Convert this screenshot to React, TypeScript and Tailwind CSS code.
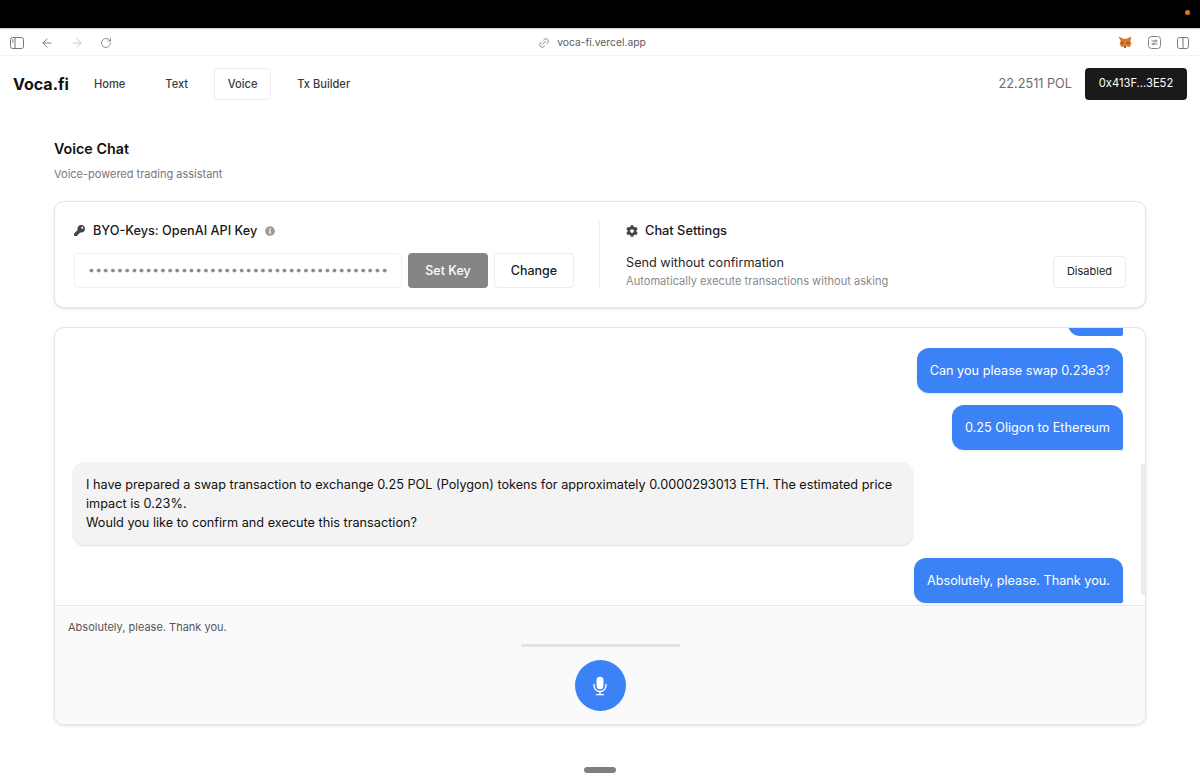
import { ArrowLeft, ArrowRight, RotateCw, Link2 } from "lucide-react"
import { FaKey, FaCog, FaInfoCircle } from "react-icons/fa"

const messages = [
  { id: 1, text: "", mine: true },
  { id: 2, text: "Can you please swap 0.23e3?", mine: true },
  { id: 3, text: "0.25 Oligon to Ethereum", mine: true },
  {
    id: 4,
    text: "I have prepared a swap transaction to exchange 0.25 POL (Polygon) tokens for approximately 0.0000293013 ETH. The estimated price impact is 0.23%.\nWould you like to confirm and execute this transaction?",
    mine: false,
  },
  { id: 5, text: "Absolutely, please. Thank you.", mine: true },
]

function BrowserBar() {
  return (
    <div className="h-[27px] pt-[1px] flex items-center border-b border-[#f3f3f3] bg-white">
      <div className="flex items-center pl-[10px] gap-[16px]">
        <svg width="14" height="12" viewBox="0 0 14 12" fill="none" stroke="#777" strokeWidth="1">
          <rect x="0.5" y="0.5" width="13" height="11" rx="2" />
          <path d="M5 0.5v11" />
          <path d="M1.8 3h2M1.8 5h2" />
        </svg>
        <ArrowLeft size={14} strokeWidth={1.5} color="#6f6f6f" />
        <ArrowRight size={14} strokeWidth={1.5} color="#c4c4c4" />
        <RotateCw size={12} strokeWidth={1.5} color="#6f6f6f" />
      </div>
      <div className="flex-1 flex items-center justify-center gap-[7px] text-[10.3px] text-[#5c5c5c] pr-[46px]">
        <Link2 size={12} strokeWidth={1.6} color="#777" className="-rotate-45" />
        voca-fi.vercel.app
      </div>
      <div className="flex items-center gap-[16px] pr-[11px]">
        <svg width="14" height="13" viewBox="0 0 13 12">
          <path d="M0.5 0.5 5 2.5h3l4.5-2-1 4 1 3-2 3-2-1h-3l-2 1-2-3 1-3z" fill="#d9772b" />
          <path d="M3 5.5l2 1-1.5 1zM10 5.5l-2 1 1.5 1z" fill="#4a3320" />
          <path d="M5.5 9.5h2L7 11H6z" fill="#3b2a1b" />
        </svg>
        <svg width="13" height="13" viewBox="0 0 13 13" fill="none" stroke="#777" strokeWidth="0.9">
          <rect x="0.5" y="0.5" width="12" height="12" rx="3" />
          <path d="M3.5 5h6M3.5 8h6" />
          <circle cx="7.5" cy="5" r="0.9" fill="#fff" />
          <circle cx="5.5" cy="8" r="0.9" fill="#fff" />
        </svg>
        <svg width="12" height="12" viewBox="0 0 12 12" fill="none" stroke="#777" strokeWidth="1">
          <rect x="0.5" y="0.5" width="11" height="11" rx="2" />
          <path d="M6 0.5v11" />
        </svg>
      </div>
    </div>
  )
}

function NavBar() {
  return (
    <nav className="h-[55px] flex items-center justify-between pl-[13px] pr-[13px]">
      <div className="flex items-center">
        <span className="text-[16px] font-bold text-[#111] w-[68px]">Voca.fi</span>
        <div className="flex items-center gap-[13px] text-[11.1px] font-medium text-[#3a3a3d]">
          <a className="px-[13px] h-[32px] pt-[1px] flex items-center">Home</a>
          <a className="ml-[1px] px-[13px] h-[32px] pt-[1px] flex items-center">Text</a>
          <a className="w-[57px] justify-center h-[32px] pt-[1px] flex items-center border border-[#ececec] rounded-[4px]">Voice</a>
          <a className="px-[13px] h-[32px] pt-[1px] flex items-center">Tx Builder</a>
        </div>
      </div>
      <div className="flex items-center gap-[13px]">
        <span className="text-[12.7px] text-[#6b6b6b]">22.2511 POL</span>
        <button className="w-[102px] h-[32px] rounded-[4px] bg-[#1a1a1a] text-[11.2px] text-white">
          0x413F...3E52
        </button>
      </div>
    </nav>
  )
}

function SettingsCard() {
  return (
    <section className="h-[107px] mt-[19px] bg-white border border-[#e6e6e6] rounded-[10px] shadow-[0_1px_3px_rgba(0,0,0,0.12)] flex items-center pl-[19px] pr-[19px]">
      <div className="w-[500px] shrink-0">
        <div className="flex items-center gap-[8px] text-[12.7px] font-medium text-[#18181b]">
          <FaKey size={11} color="#444" />
          BYO-Keys: OpenAI API Key
          <FaInfoCircle size={10} color="#9a9a9a" />
        </div>
        <div className="flex items-center gap-[6px] mt-[12px]">
          <div className="w-[328px] h-[35px] border border-[#f0f0f0] rounded-[4px] flex items-center pl-[13px] text-[#8a8a8a] text-[12px] tracking-[0.4px] [text-rendering:geometricPrecision] whitespace-nowrap">
            {"•".repeat(42)}
          </div>
          <button className="w-[80px] h-[35px] pt-[2px] rounded-[4px] bg-[#858585] text-white text-[12.5px] font-medium">Set Key</button>
          <button className="w-[80px] h-[35px] pt-[2px] rounded-[4px] border border-[#ececec] text-[#222] text-[12.5px] font-medium">Change</button>
        </div>
      </div>
      <div className="w-px h-[68px] bg-[#efefef] ml-[25px] mr-[26px]" />
      <div className="flex-1 pt-[1px]">
        <div className="flex items-center gap-[7px] text-[12.8px] font-medium text-[#18181b]">
          <FaCog size={12} color="#444" />
          Chat Settings
        </div>
        <div className="flex items-center justify-between mt-[14px]">
          <div>
            <p className="text-[12.7px] leading-[16px] text-[#27272a]">Send without confirmation</p>
            <p className="text-[11.1px] leading-[16px] mt-[2px] text-[#8a8a8a]">Automatically execute transactions without asking</p>
          </div>
          <button className="w-[73px] h-[32px] rounded-[4px] border border-[#ececec] text-[11px] text-[#222]">Disabled</button>
        </div>
      </div>
    </section>
  )
}

function ChatCard() {
  return (
    <section className="relative h-[398px] mt-[19px] bg-white border border-[#e6e6e6] rounded-[10px] shadow-[0_1px_3px_rgba(0,0,0,0.12)] overflow-hidden flex flex-col">
      <div className="h-[277px] flex flex-col justify-end gap-[12px] overflow-hidden pl-[18px] pr-[22px] pb-[2px]">
        {messages.map((m) => {
          if (!m.mine) {
            return (
              <div key={m.id} className="shrink-0 self-start w-[840px] h-[83px] mb-[1px] flex items-center px-[13px] bg-[#f3f3f3] text-[#111] text-[12.7px] leading-[19px] rounded-[12px] shadow-[0_1px_2px_rgba(0,0,0,0.14)] whitespace-pre-line">
                {m.text}
              </div>
            )
          }
          // first bubble is scrolled almost out of view, only its bottom edge shows
          if (!m.text) {
            return <div key={m.id} className="shrink-0 self-end w-[55px] h-[45px] bg-[#3b82f6] rounded-[12px] rounded-br-[2px]" />
          }
          return (
            <div key={m.id} className="shrink-0 self-end h-[45px] pt-[1px] flex items-center px-[13px] bg-[#3b82f6] text-white text-[12.7px] rounded-[12px] rounded-br-[2px] shadow-[0_1px_2px_rgba(0,0,0,0.1)] whitespace-nowrap">
              {m.text}
            </div>
          )
        })}
      </div>
      <div className="absolute right-0 top-[136px] w-[4px] h-[131px] bg-[#ececec]" />
      <div className="flex-1 bg-[#fafafa] border-t border-[#e8e8e8] px-[13px] pt-[13px]">
        <p className="text-[11px] leading-[16px] text-[#555]">Absolutely, please. Thank you.</p>
        <div className="w-[159px] h-[3px] mx-auto mt-[9px] rounded-full bg-[#e2e2e2]" />
        <button className="w-[51px] h-[51px] mx-auto mt-[13px] rounded-full bg-[#3b82f6] flex items-center justify-center">
          <svg width="18" height="20" viewBox="0 0 18 20" fill="none" stroke="#fff" strokeWidth="1.4" strokeLinecap="round">
            <rect x="5.5" y="0.8" width="7" height="12.4" rx="3.5" fill="#fff" stroke="none" />
            <path d="M3 8.5v1a6 6 0 0 0 12 0v-1" />
            <path d="M9 15.5v3M5.5 18.6h7" />
          </svg>
        </button>
      </div>
    </section>
  )
}

export default function App() {
  return (
    <div className="relative w-[1200px] h-[779px] overflow-hidden bg-white font-['Inter',sans-serif]">
      <div className="relative h-[29px] bg-black border-b border-[#d0d0d0]">
        <span className="absolute left-[1185px] top-[10px] w-[5px] h-[5px] rounded-full bg-[#e07a1f]" />
      </div>
      <BrowserBar />
      <NavBar />
      <main className="px-[54px] pt-[29px]">
        <h1 className="text-[14.3px] leading-[18px] font-semibold text-[#111]">Voice Chat</h1>
        <p className="text-[11px] leading-[16px] mt-[8px] text-[#777]">Voice-powered trading assistant</p>
        <SettingsCard />
        <ChatCard />
      </main>
      <div className="absolute left-[584px] top-[767px] w-[32px] h-[6px] rounded-full bg-[#808080]" />
    </div>
  )
}
